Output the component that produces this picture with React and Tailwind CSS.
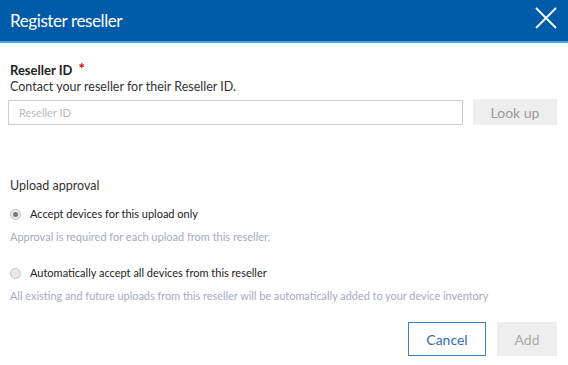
import React, { useState } from "react";

function Radio({ checked, onChange, label }) {
    return (
        <label className="flex items-center gap-[9px] h-[14px] cursor-pointer" onClick={onChange}>
            <span className="w-[11px] h-[11px] rounded-full border border-[#c4c4c4] bg-[#e9e9e9] flex items-center justify-center">
                {checked && <span className="w-[5px] h-[5px] rounded-full bg-[#7a7a7a]" />}
            </span>
            <span className="text-[11px] text-[#222] leading-[14px]">{label}</span>
        </label>
    );
}

export default function App() {
    const [mode, setMode] = useState("once");
    const [resellerId, setResellerId] = useState("");

    return (
        <div className="w-[568px] h-[365px] bg-white overflow-hidden" style={{ fontFamily: "Lato, 'Open Sans', sans-serif" }}>
            {/* Header */}
            <div className="h-[43px] bg-[#005ca8] border-b-2 border-[#4aa3e6] flex items-center justify-between pl-[10px] pr-[11px]">
                <h1 className="text-[17px] text-white tracking-[-0.4px]">Register reseller</h1>
                <button className="text-white self-start mt-[7px]">
                    <svg width="22" height="22" viewBox="0 0 22 22" fill="none" stroke="currentColor" strokeWidth="1.8">
                        <path d="M1 1 L21 21 M21 1 L1 21" />
                    </svg>
                </button>
            </div>

            {/* Body */}
            <div className="px-[10px] pt-[18px]">
                <div className="flex items-start gap-[6px] h-[18px]">
                    <span className="text-[13px] font-bold text-[#222] leading-[18px]">Reseller ID</span>
                    <span className="text-[#c00] text-[15px] leading-[14px] font-bold">*</span>
                </div>
                <p className="text-[12.5px] text-[#333] leading-[16px]">Contact your reseller for their Reseller ID.</p>

                <div className="flex items-center gap-[10px] mt-[4px] -ml-[2px]">
                    <input
                        value={resellerId}
                        onChange={(e) => setResellerId(e.target.value)}
                        placeholder="Reseller ID"
                        className="w-[455px] h-[25px] border border-[#ccc] px-[10px] text-[11px] text-[#333] placeholder:text-[#bbb] outline-none"
                    />
                    <button className="w-[84px] h-[26px] bg-[#eeeeee] text-[#999] text-[14px]">Look up</button>
                </div>

                <p className="text-[12.5px] text-[#333] leading-[18px] mt-[52px]">Upload approval</p>

                <div className="mt-[12px]">
                    <Radio checked={mode === "once"} onChange={() => setMode("once")} label="Accept devices for this upload only" />
                </div>
                <p className="text-[11px] text-[#a6a9c4] leading-[14px] mt-[9px]">Approval is required for each upload from this reseller.</p>

                <div className="mt-[22px]">
                    <Radio checked={mode === "auto"} onChange={() => setMode("auto")} label="Automatically accept all devices from this reseller" />
                </div>
                <p className="text-[10.9px] text-[#a6a9c4] leading-[14px] mt-[9px]">All existing and future uploads from this reseller will be automatically added to your device inventory</p>

                {/* Footer */}
                <div className="flex justify-end gap-[11px] mt-[19px] pr-[1px]">
                    <button className="w-[78px] h-[34px] border border-[#3d7fc4] text-[#2f6db1] text-[14px]">Cancel</button>
                    <button className="w-[60px] h-[34px] bg-[#eeeeee] text-[#aaa] text-[14px]">Add</button>
                </div>
            </div>
        </div>
    );
}
